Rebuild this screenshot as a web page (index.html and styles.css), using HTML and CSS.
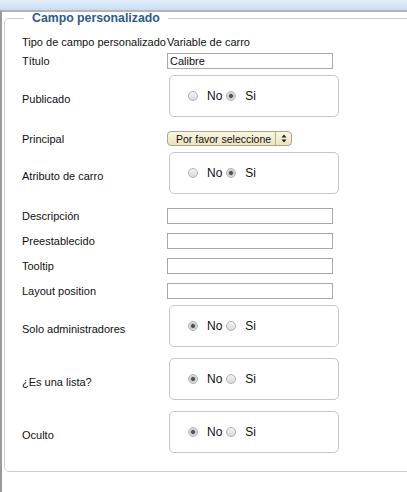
FILE: index.html
```html
<!DOCTYPE html>
<html lang="es">
<head>
    <meta charset="UTF-8">
    <meta name="viewport" content="width=device-width, initial-scale=1.0">
    <title>Campo personalizado</title>
    <link rel="stylesheet" href="styles.css">
</head>
<body>
    <div class="top-strip"></div>

    <div class="panel">
        <fieldset class="field-group">
            <legend>Campo personalizado</legend>

            <div class="row row-text">
                <span class="row-label">Tipo de campo personalizado</span>
                <span class="row-value">Variable de carro</span>
            </div>

            <div class="row row-first">
                <label class="row-label" for="titulo">Título</label>
                <input class="text-input" id="titulo" type="text" value="Calibre">
            </div>

            <div class="row row-radio">
                <span class="row-label">Publicado</span>
                <div class="radio-box">
                    <input class="radio" type="radio" name="publicado" id="pub-no">
                    <label class="radio-label" for="pub-no">No</label>
                    <input class="radio" type="radio" name="publicado" id="pub-si" checked>
                    <label class="radio-label" for="pub-si">Si</label>
                </div>
            </div>

            <div class="row">
                <span class="row-label">Principal</span>
                <div class="select">
                    <span class="select-text">Por favor seleccione</span>
                    <span class="select-arrows">
                        <svg width="6" height="9" viewBox="0 0 6 9">
                            <path d="M3 0.5 L5.5 3.5 H0.5 Z" fill="#222"/>
                            <path d="M3 8.5 L5.5 5.5 H0.5 Z" fill="#222"/>
                        </svg>
                    </span>
                </div>
            </div>

            <div class="row row-radio">
                <span class="row-label">Atributo de carro</span>
                <div class="radio-box">
                    <input class="radio" type="radio" name="atributo" id="atr-no">
                    <label class="radio-label" for="atr-no">No</label>
                    <input class="radio" type="radio" name="atributo" id="atr-si" checked>
                    <label class="radio-label" for="atr-si">Si</label>
                </div>
            </div>

            <div class="row">
                <label class="row-label" for="descripcion">Descripción</label>
                <input class="text-input" id="descripcion" type="text">
            </div>

            <div class="row">
                <label class="row-label" for="preestablecido">Preestablecido</label>
                <input class="text-input" id="preestablecido" type="text">
            </div>

            <div class="row">
                <label class="row-label" for="tooltip">Tooltip</label>
                <input class="text-input" id="tooltip" type="text">
            </div>

            <div class="row">
                <label class="row-label" for="layout">Layout position</label>
                <input class="text-input" id="layout" type="text">
            </div>

            <div class="row row-radio">
                <span class="row-label">Solo administradores</span>
                <div class="radio-box">
                    <input class="radio" type="radio" name="admin" id="adm-no" checked>
                    <label class="radio-label" for="adm-no">No</label>
                    <input class="radio" type="radio" name="admin" id="adm-si">
                    <label class="radio-label" for="adm-si">Si</label>
                </div>
            </div>

            <div class="row row-radio">
                <span class="row-label">¿Es una lista?</span>
                <div class="radio-box">
                    <input class="radio" type="radio" name="lista" id="lis-no" checked>
                    <label class="radio-label" for="lis-no">No</label>
                    <input class="radio" type="radio" name="lista" id="lis-si">
                    <label class="radio-label" for="lis-si">Si</label>
                </div>
            </div>

            <div class="row row-radio">
                <span class="row-label">Oculto</span>
                <div class="radio-box">
                    <input class="radio" type="radio" name="oculto" id="ocu-no" checked>
                    <label class="radio-label" for="ocu-no">No</label>
                    <input class="radio" type="radio" name="oculto" id="ocu-si">
                    <label class="radio-label" for="ocu-si">Si</label>
                </div>
            </div>
        </fieldset>
    </div>
</body>
</html>
```

FILE: styles.css
```css
/* Basic Reset & Globals */
html, body {
    margin: 0;
    padding: 0;
    overflow: hidden;
}

body {
    font-family: "Liberation Sans", Arial, sans-serif;
    font-size: 11px;
    color: #111;
    background-color: #fff;
}

.top-strip {
    height: 10px;
    background: linear-gradient(#e4effb, #c7dcf3);
}

.panel {
    border-top: 2px solid #b4b4b4;
    border-left: 2px solid #9a9a9a;
    padding-left: 2px;
    min-height: 480px;
}

/* Fieldset - runs past the right edge of the window */
.field-group {
    min-width: 0;
    margin: 0 -40px 0 0;
    padding: 11px 0 13px 17px;
    border: 1px solid #cdcdcd;
    border-radius: 5px;
    display: flex;
    flex-direction: column;
}

.field-group legend {
    margin-left: 2px;
    padding: 0 8px;
    font-size: 12.3px;
    line-height: 12px;
    font-weight: bold;
    color: #2d5b8c;
}

/* Rows */
.row {
    display: flex;
    align-items: center;
    margin-top: 9px;
}

.row-text {
    margin-top: 0;
    line-height: 14px;
}

.row-first {
    margin-top: 4px;
}

.row-radio {
    margin-top: 6px;
    margin-bottom: 5px;
}

.row-label {
    width: 145px;
    flex-shrink: 0;
}

.row-radio .row-label {
    padding-top: 6px;
}

/* Inputs */
.text-input {
    box-sizing: border-box;
    width: 166px;
    height: 16px;
    margin: 0;
    padding: 0 2px;
    border: 1px solid #a9a9a9;
    font-family: inherit;
    font-size: 11px;
    color: #111;
}

.radio-box {
    box-sizing: border-box;
    width: 170px;
    height: 42px;
    margin-left: 2px;
    padding-left: 18px;
    border: 1px solid #c8c8c8;
    border-radius: 5px;
    display: flex;
    align-items: center;
}

.radio {
    appearance: none;
    -webkit-appearance: none;
    width: 10px;
    height: 10px;
    margin: 0 9px 0 0;
    border: 1px solid #b2b2b2;
    border-radius: 50%;
    background: linear-gradient(#f4f4f4, #d9d9d9);
    box-sizing: border-box;
}

.radio:checked {
    background: radial-gradient(circle, #4a4a4a 0, #5a5a5a 1.6px, #c4c4c4 2.4px, #e6e6e6 4px);
}

.radio-label {
    font-size: 12px;
    margin-right: 4px;
}

/* Select */
.select {
    box-sizing: border-box;
    width: 125px;
    height: 15px;
    border: 1px solid #aaa58c;
    border-radius: 4px;
    background: linear-gradient(#faf6e0, #ece4bd);
    display: flex;
    align-items: center;
    font-size: 10.5px;
    line-height: 12px;
}

.select-text {
    flex-grow: 1;
    padding-left: 8px;
    white-space: nowrap;
}

.select-arrows {
    width: 15px;
    height: 13px;
    border-left: 1px solid #b8b294;
    display: flex;
    align-items: center;
    justify-content: center;
}
```
